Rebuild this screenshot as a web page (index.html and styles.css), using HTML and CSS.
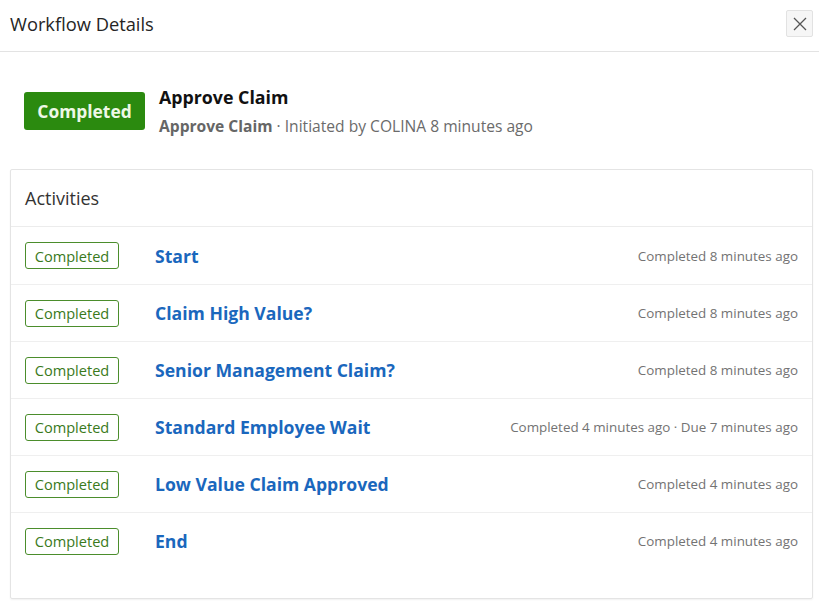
FILE: index.html
```html
<!DOCTYPE html>
<html lang="en">
<head>
<meta charset="utf-8">
<title>Workflow Details</title>
<link rel="stylesheet" href="styles.css">
</head>
<body>
<div class="dialog">
  <header class="dlg-header">
    <h1 class="dlg-title">Workflow Details</h1>
    <button class="close-btn" aria-label="Close">
      <svg width="14" height="14" viewBox="0 0 14 14"><path d="M1 1L13 13M13 1L1 13" stroke="#555" stroke-width="1.3" fill="none"/></svg>
    </button>
  </header>

  <section class="summary">
    <span class="badge-solid">Completed</span>
    <div class="summary-text">
      <div class="summary-title">Approve Claim</div>
      <div class="summary-sub"><strong>Approve Claim</strong> · Initiated by COLINA 8 minutes ago</div>
    </div>
  </section>

  <section class="card">
    <div class="card-header">Activities</div>
    <div class="row">
      <span class="badge-outline">Completed</span>
      <a class="act-name" href="#">Start</a>
      <span class="act-meta">Completed 8 minutes ago</span>
    </div>
    <div class="row">
      <span class="badge-outline">Completed</span>
      <a class="act-name" href="#">Claim High Value?</a>
      <span class="act-meta">Completed 8 minutes ago</span>
    </div>
    <div class="row">
      <span class="badge-outline">Completed</span>
      <a class="act-name" href="#">Senior Management Claim?</a>
      <span class="act-meta">Completed 8 minutes ago</span>
    </div>
    <div class="row">
      <span class="badge-outline">Completed</span>
      <a class="act-name" href="#">Standard Employee Wait</a>
      <span class="act-meta">Completed 4 minutes ago · Due 7 minutes ago</span>
    </div>
    <div class="row">
      <span class="badge-outline">Completed</span>
      <a class="act-name" href="#">Low Value Claim Approved</a>
      <span class="act-meta">Completed 4 minutes ago</span>
    </div>
    <div class="row">
      <span class="badge-outline">Completed</span>
      <a class="act-name" href="#">End</a>
      <span class="act-meta">Completed 4 minutes ago</span>
    </div>
  </section>
</div>
</body>
</html>
```

FILE: styles.css
```css
html, body {
  margin: 0;
  padding: 0;
  background: #fff;
}

body {
  font-family: "Open Sans", "Noto Sans", "Liberation Sans", sans-serif;
  color: #222;
  width: 819px;
  height: 606px;
  overflow: hidden;
}

.dialog {
  display: flex;
  flex-direction: column;
}

.dlg-header {
  height: 52px;
  box-sizing: border-box;
  border-bottom: 1px solid #e3e3e3;
  display: flex;
  align-items: center;
  justify-content: space-between;
  padding: 0 6px 0 10px;
}

.dlg-title {
  margin: 0;
  font-size: 18.3px;
  font-weight: 400;
  color: #252525;
  position: relative;
  top: -2px;
}

.close-btn {
  width: 27px;
  height: 27px;
  margin-top: -4px;
  border: 1px solid #e2e2e2;
  border-radius: 2px;
  background: #f6f6f6;
  display: flex;
  align-items: center;
  justify-content: center;
  padding: 0;
}

.summary {
  display: flex;
  align-items: flex-start;
  gap: 14px;
  padding: 39px 0 0 24px;
  height: 117px;
  box-sizing: border-box;
}

.badge-solid {
  width: 121px;
  height: 38px;
  box-sizing: border-box;
  background: #2b8a0f;
  color: #eef8e6;
  border-radius: 3px;
  font-weight: 700;
  font-size: 17.4px;
  display: flex;
  align-items: center;
  justify-content: center;
  margin-top: 1px;
}

.summary-text {
  display: flex;
  flex-direction: column;
  gap: 6px;
  margin-top: -6px;
}

.summary-title {
  font-size: 17.8px;
  font-weight: 700;
  color: #111;
  line-height: 24px;
}

.summary-sub {
  font-size: 15.6px;
  color: #6b6b6b;
  line-height: 22px;
}

.summary-sub strong {
  color: #666;
  font-weight: 700;
}

.card {
  margin: 0 6px 0 10px;
  border: 1px solid #e4e4e4;
  border-radius: 2px;
  box-shadow: 0 1px 2px rgba(0,0,0,0.06);
  height: 430px;
  box-sizing: border-box;
}

.card-header {
  height: 57px;
  box-sizing: border-box;
  border-bottom: 1px solid #ececec;
  padding-left: 14px;
  display: flex;
  align-items: center;
  font-size: 18px;
  color: #333;
}

.row {
  height: 57px;
  box-sizing: border-box;
  display: flex;
  align-items: center;
  padding: 0 14px;
}

.row + .row {
  border-top: 1px solid #efefef;
}

.badge-outline {
  width: 94px;
  height: 27px;
  box-sizing: border-box;
  border: 1px solid #4b8d2c;
  border-radius: 3px;
  color: #3a7a1c;
  font-size: 14.6px;
  display: flex;
  align-items: center;
  justify-content: center;
  flex-shrink: 0;
}

.act-name {
  margin-left: 36px;
  font-size: 17.6px;
  font-weight: 700;
  color: #1a67bd;
  text-decoration: none;
}

.act-meta {
  margin-left: auto;
  font-size: 13.4px;
  color: #737373;
}
```
